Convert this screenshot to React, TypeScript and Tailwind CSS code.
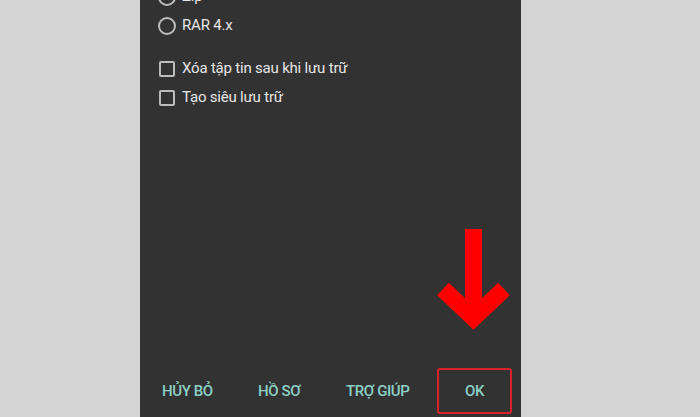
import React from "react";

const Radio = ({ label }: { label: string }) => (
  <div className="flex items-center h-[29px]">
    <div className="w-[18px] h-[18px] rounded-full border-2 border-[#bdbdbd] ml-[18px]" />
    <span className="ml-[6px] text-[15px] tracking-[-0.2px] text-[#e6e6e6]">{label}</span>
  </div>
);

const Check = ({ label }: { label: string }) => (
  <div className="flex items-center h-[29px]">
    <div className="w-[16px] h-[16px] rounded-[2px] border-2 border-[#bdbdbd] ml-[19px]" />
    <span className="ml-[7px] text-[15px] tracking-[-0.2px] text-[#e6e6e6]">{label}</span>
  </div>
);

export default function App() {
  return (
    <div
      className="relative w-[700px] h-[417px] bg-[#d4d4d4] overflow-hidden"
      style={{ fontFamily: "Roboto, 'Noto Sans', sans-serif" }}
    >
      <div className="ml-[140px] w-[381px] h-[417px] bg-[#323232] flex flex-col">
        <div className="mt-[-18px] flex flex-col">
          <Radio label="Zip" />
          <Radio label="RAR 4.x" />
          <div className="h-[14px]" />
          <Check label="Xóa tập tin sau khi lưu trữ" />
          <Check label="Tạo siêu lưu trữ" />
        </div>
        <div className="flex-1" />
        <div className="flex items-center h-[46px] mb-[3px] text-[15px] font-medium tracking-[-0.4px] text-[#8dd0c4]">
          <span className="ml-[22px] w-[96px]">HỦY BỎ</span>
          <span className="w-[88px]">HỒ SƠ</span>
          <span className="w-[91px]">TRỢ GIÚP</span>
          <div className="w-[75px] h-[46px] border-2 border-[#d9232b] rounded-[3px] flex items-center justify-center">
            OK
          </div>
        </div>
      </div>
      <svg className="absolute left-0 top-0" width="700" height="417" viewBox="0 0 700 417">
        <rect x="465" y="229" width="17" height="85" fill="#ff0000" />
        <polyline
          points="443,289 473.5,318 504,289"
          fill="none"
          stroke="#ff0000"
          strokeWidth="17"
          strokeLinejoin="miter"
          strokeLinecap="butt"
        />
      </svg>
    </div>
  );
}
